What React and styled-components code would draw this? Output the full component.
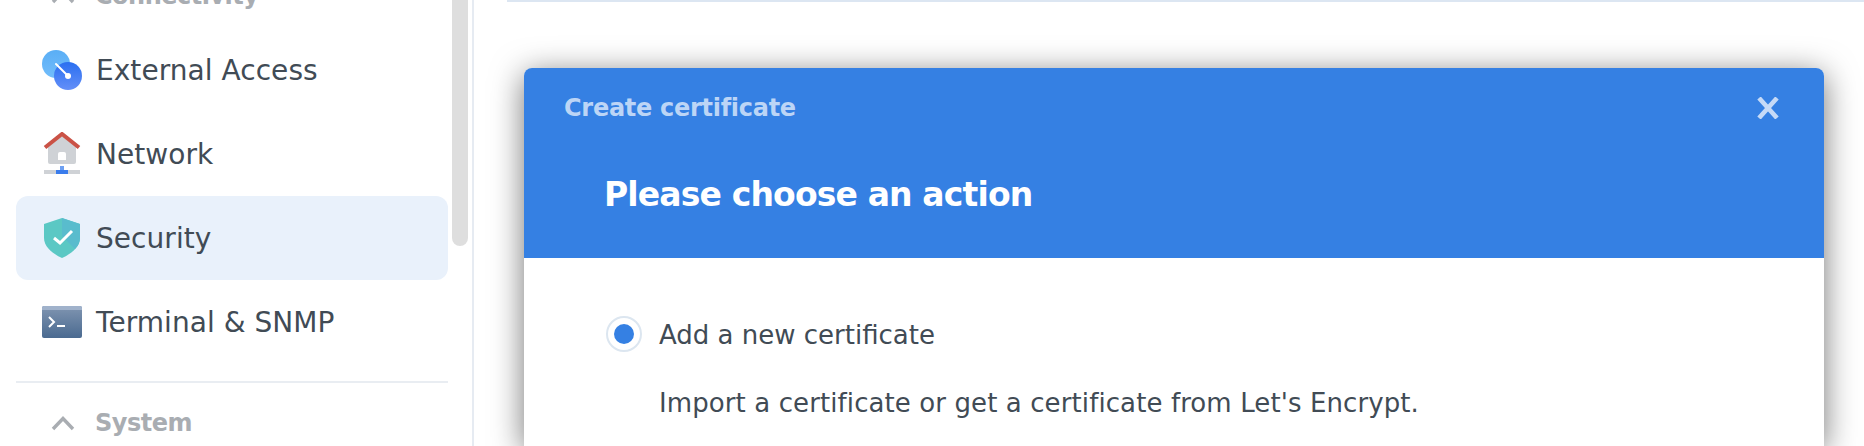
import React from 'react';
import styled, { createGlobalStyle } from 'styled-components';

const Global = createGlobalStyle`
  html, body { margin: 0; padding: 0; background: #fff; }
  body { font-family: "DejaVu Sans", Verdana, sans-serif; color: #414b55; }
`;
const Page = styled.div`
  width: 1864px; height: 446px; display: flex; overflow: hidden; background: #fff;
`;
const Sidebar = styled.aside`
  width: 472px; height: 446px; flex: none; display: flex; overflow: hidden;
  border-right: 2px solid #e6ebf2; box-sizing: content-box;
`;
const NavList = styled.nav`
  width: 432px; margin: -28px 4px 0 16px; flex: none; display: flex; flex-direction: column;
`;
const SectionHead = styled.div`
  height: ${p => p.$h}px; margin-bottom: ${p => p.$after || 0}px; display: flex; align-items: center; gap: 17px; padding-left: 35px;
  font-size: 24px; font-weight: 700; color: #a9adb2; flex: none; letter-spacing: -0.5px;
`;
const Row = styled.div`
  height: 84px; flex: none; display: flex; align-items: center; gap: 14px; padding-left: 26px;
  font-size: 28px; letter-spacing: 0.05px; border-radius: 12px;
  background: ${p => (p.$active ? '#e9f1fb' : 'transparent')};
`;
const IconBox = styled.span`
  width: 40px; flex: none; display: flex; justify-content: center; align-items: center;
`;
const Divider = styled.hr`
  margin: 17px 0 0; border: 0; height: 2px; background: #e9edf2; flex: none;
`;
const ScrollTrack = styled.div`
  width: 16px; flex: none; height: 246px; background: #dedede; border-radius: 0 0 8px 8px;
`;
const Main = styled.main`
  flex: 1; padding-left: 33px; display: flex; flex-direction: column; min-width: 0;
`;
const TopLine = styled.div`
  height: 2px; background: #dce6f2; flex: none;
`;
const Dialog = styled.section`
  margin: 66px 40px 0 17px; flex: 1; background: #fff; border-radius: 8px 8px 0 0;
  box-shadow: 0 6px 32px rgba(0,0,0,.55);
`;
const DialogHead = styled.header`
  height: 190px; background: #3580e3; border-radius: 8px 8px 0 0; position: relative;
  padding: 24px 0 0 40px; box-sizing: border-box;
`;
const DialogTitle = styled.div`
  font-size: 24px; line-height: 32px; font-weight: 700; color: #bcd5f6; letter-spacing: -0.28px;
`;
const Heading = styled.h1`
  margin: 51px 0 0 40px; font-size: 33px; line-height: 40px; font-weight: 700; color: #fff; letter-spacing: -0.85px;
`;
const Close = styled.button`
  position: absolute; top: 29px; right: 45px; width: 22px; height: 22px; padding: 0; border: 0;
  background: none; display: flex;
`;
const DialogBody = styled.div`
  padding: 58px 0 0 82px; display: flex; flex-direction: column;
`;
const RadioRow = styled.label`
  display: flex; align-items: flex-start; gap: 17px; height: 36px;
`;
const RadioLabel = styled.span`
  padding-top: 3px; font-size: 26px; line-height: 33px; letter-spacing: 0;
`;
const RadioRing = styled.span`
  width: 36px; height: 36px; box-sizing: border-box; border: 2px solid #dce6f0; border-radius: 50%;
  display: flex; align-items: center; justify-content: center; flex: none;
`;
const RadioDot = styled.span`
  width: 20px; height: 20px; border-radius: 50%; background: #3580e3;
`;
const Hint = styled.p`
  margin: 33px 0 0 53px; font-size: 26px; line-height: 36px; letter-spacing: 0.1px; white-space: nowrap;
`;

const ExternalIcon = () => (
  <svg width="40" height="40" viewBox="0 0 40 40">
    <defs>
      <linearGradient id="ea1" x1="0" y1="0" x2="0" y2="1"><stop offset="0" stopColor="#5aaef5" /><stop offset="1" stopColor="#72bdfb" /></linearGradient>
      <linearGradient id="ea2" x1="0" y1="0" x2="0" y2="1"><stop offset="0" stopColor="#2a6ff0" /><stop offset="1" stopColor="#648ff8" /></linearGradient>
    </defs>
    <circle cx="14" cy="14" r="14" fill="url(#ea1)" />
    <circle cx="26" cy="26" r="14" fill="url(#ea2)" />
    <path d="M14 14 L26 26" stroke="#fff" strokeWidth="2" strokeLinecap="round" />
    <circle cx="26" cy="26" r="3" fill="#fff" />
  </svg>
);
const NetworkIcon = () => (
  <svg width="40" height="44" viewBox="0 0 40 44">
    <path d="M6 15 L20 4 L34 15 V30 a2 2 0 0 1 -2 2 H8 a2 2 0 0 1 -2 -2 Z" fill="#cfd2d6" />
    <path d="M3 15.5 L20 2 L37 15.5" fill="none" stroke="#ca5246" strokeWidth="4" />
    <path d="M16 22 a2 2 0 0 1 2 -2 h4 a2 2 0 0 1 2 2 v6 h-8 Z" fill="#fff" />
    <rect x="2" y="38" width="36" height="4" fill="#cfd2d6" />
    <rect x="18" y="34" width="4" height="4" fill="#6ea0f2" />
    <rect x="14" y="38" width="12" height="4" fill="#3a7cec" />
  </svg>
);
const ShieldIcon = () => (
  <svg width="40" height="40" viewBox="0 0 40 40">
    <path d="M20 0 L38 6 V20 C38 29 29 36 20 40 C11 36 2 29 2 20 V6 Z" fill="#5bc8c4" />
    <path d="M20 0 L38 6 V20 C38 24 36 28 33 31 L20 18 Z" fill="#59bccd" />
    <path d="M12 20 L18 25 L30 13" fill="none" stroke="#fff" strokeWidth="3" />
  </svg>
);
const TerminalIcon = () => (
  <svg width="40" height="32" viewBox="0 0 40 32">
    <defs>
      <linearGradient id="tm" x1="0" y1="0" x2="0" y2="1"><stop offset="0" stopColor="#8095b1" /><stop offset="1" stopColor="#4a6a90" /></linearGradient>
    </defs>
    <rect width="40" height="32" rx="2" fill="url(#tm)" />
    <path d="M0 4 V2 a2 2 0 0 1 2 -2 H38 a2 2 0 0 1 2 2 V4 Z" fill="#a0b2cb" />
    <path d="M7 11 L12 16 L7 21" fill="none" stroke="#fff" strokeWidth="2" />
    <rect x="15" y="19" width="8" height="2" fill="#fff" />
  </svg>
);
const ChevronWrap = styled.span`
  width: 30px; flex: none; display: flex; justify-content: center; margin-left: -3px;
`;
const Chevron = () => (
  <ChevronWrap>
    <svg width="24" height="16" viewBox="0 0 24 16" fill="none" stroke="#a9adb2" strokeWidth="3.4">
      <path d="M2 14 L12 3.5 L22 14" />
    </svg>
  </ChevronWrap>
);
const CloseIcon = () => (
  <svg width="22" height="22" viewBox="0 0 22 22" fill="none" stroke="#c6daf7" strokeWidth="4.6">
    <path d="M2 1 L20 21 M20 1 L2 21" />
  </svg>
);

const items = [
  ['External Access', <ExternalIcon key="e" />],
  ['Network', <NetworkIcon key="n" />],
  ['Security', <ShieldIcon key="s" />],
  ['Terminal & SNMP', <TerminalIcon key="t" />],
];

export default function App() {
  return (
    <Page>
      <Global />
      <Sidebar>
        <NavList>
          <SectionHead $h={48} $after={8}><Chevron />Connectivity</SectionHead>
          {items.map(([label, icon]) => (
            <Row key={label} $active={label === 'Security'}>
              <IconBox>{icon}</IconBox>
              {label}
            </Row>
          ))}
          <Divider />
          <SectionHead $h={80}><Chevron />System</SectionHead>
        </NavList>
        <ScrollTrack />
      </Sidebar>
      <Main>
        <TopLine />
        <Dialog>
          <DialogHead>
            <DialogTitle>Create certificate</DialogTitle>
            <Heading>Please choose an action</Heading>
            <Close aria-label="Close"><CloseIcon /></Close>
          </DialogHead>
          <DialogBody>
            <RadioRow><RadioRing><RadioDot /></RadioRing><RadioLabel>Add a new certificate</RadioLabel></RadioRow>
            <Hint>Import a certificate or get a certificate from Let's Encrypt.</Hint>
          </DialogBody>
        </Dialog>
      </Main>
    </Page>
  );
}
